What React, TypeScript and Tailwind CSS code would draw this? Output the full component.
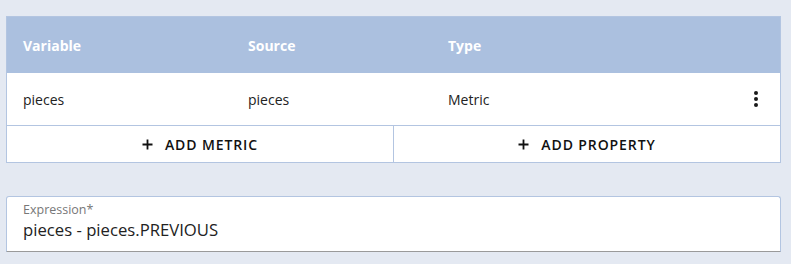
function Plus() {
  return (
    <svg width="11" height="11" viewBox="0 0 11 11" className="shrink-0">
      <path d="M5.5 0.5v10M0.5 5.5h10" stroke="#111" strokeWidth="1.8" />
    </svg>
  );
}

export default function App() {
  const font = { fontFamily: '"Open Sans", "Noto Sans", sans-serif' };
  return (
    <div className="w-[791px] h-[264px] bg-[#e4e9f2] pt-4 pl-[6px] pr-[10px]" style={font}>
      <div className="border border-[#b3c5e1] bg-white">
        <div className="flex h-[56px] items-center bg-[#abc0df] text-[14px] font-bold text-white">
          <div className="w-[225px] pl-4">Variable</div>
          <div className="w-[200px] pl-4">Source</div>
          <div className="flex-1 pl-4">Type</div>
        </div>
        <div className="flex h-[52px] items-center text-[14px] text-[#222]">
          <div className="w-[225px] pl-4">pieces</div>
          <div className="w-[200px] pl-4">pieces</div>
          <div className="flex-1 pl-4">Metric</div>
          <div className="mr-[22px] flex flex-col gap-[2px]">
            <span className="h-[4px] w-[4px] rounded-full bg-[#1a1a1a]" />
            <span className="h-[4px] w-[4px] rounded-full bg-[#1a1a1a]" />
            <span className="h-[4px] w-[4px] rounded-full bg-[#1a1a1a]" />
          </div>
        </div>
        <div className="flex h-[37px] border-t border-[#b3c5e1] text-[14px] font-semibold tracking-[0.9px] text-[#111]">
          <button className="flex flex-1 items-center justify-center gap-[12px] border-r border-[#b3c5e1]">
            <Plus />
            ADD METRIC
          </button>
          <button className="flex flex-1 items-center justify-center gap-[12px]">
            <Plus />
            ADD PROPERTY
          </button>
        </div>
      </div>
      <div className="mt-[33px] h-[56px] rounded-t-[3px] border border-[#b3c5e1] border-b-[#9a9a9a] bg-white px-4 pt-[4px]">
        <div className="text-[12.5px] leading-[17px] text-[#777]">Expression*</div>
        <div className="text-[16.7px] leading-[23px] text-[#222]">pieces - pieces.PREVIOUS</div>
      </div>
    </div>
  );
}
